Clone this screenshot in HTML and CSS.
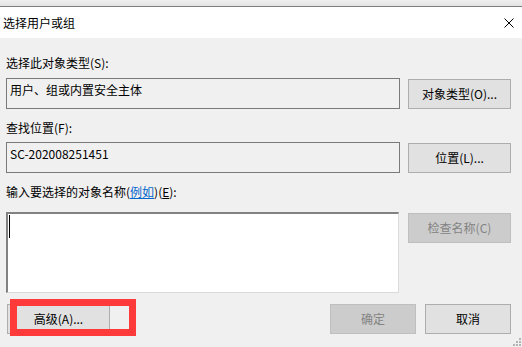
FILE: index.html
```html
<!DOCTYPE html>
<html lang="zh-CN">
<head>
  <meta charset="UTF-8" />
  <title>选择用户或组</title>
  <link rel="stylesheet" href="styles.css">
</head>
<body>

  <div class="dialog">
    <div class="topedge"></div>

    <div class="titlebar">
      <span class="title">选择用户或组</span>
      <svg class="close" width="10" height="10" viewBox="0 0 10 10">
        <path d="M0.5 0.5 L9.5 9.5 M9.5 0.5 L0.5 9.5" stroke="#000" stroke-width="1" fill="none" />
      </svg>
    </div>

    <div class="content">
      <div class="label label-first">选择此对象类型(S):</div>
      <div class="row">
        <div class="field">用户、组或内置安全主体</div>
        <button class="btn">对象类型(O)...</button>
      </div>

      <div class="label">查找位置(F):</div>
      <div class="row">
        <div class="field">SC-202008251451</div>
        <button class="btn">位置(L)...</button>
      </div>

      <div class="label label-names">输入要选择的对象名称(<a class="link" href="#">例如</a>)(<u>E</u>):</div>
      <div class="row">
        <div class="textbox"><span class="caret"></span></div>
        <button class="btn" disabled>检查名称(C)</button>
      </div>

      <div class="bottom">
        <div class="advanced">
          <button class="btn btn-wide">高级(A)...</button>
          <div class="mark"></div>
        </div>
        <div class="actions">
          <button class="btn btn-small" disabled>确定</button>
          <button class="btn btn-small">取消</button>
        </div>
      </div>
    </div>

    <svg class="grip" width="8" height="8" viewBox="0 0 8 8">
      <rect x="6" y="0" width="2" height="2" fill="#b4b4b4" />
      <rect x="3" y="3" width="2" height="2" fill="#b4b4b4" />
      <rect x="6" y="3" width="2" height="2" fill="#b4b4b4" />
      <rect x="0" y="6" width="2" height="2" fill="#b4b4b4" />
      <rect x="3" y="6" width="2" height="2" fill="#b4b4b4" />
      <rect x="6" y="6" width="2" height="2" fill="#b4b4b4" />
    </svg>
  </div>

</body>
</html>
```

FILE: styles.css
```css
html, body {
  margin: 0;
  padding: 0;
}
body {
  font-family: "Noto Sans CJK SC", "Noto Sans", sans-serif;
  font-size: 12px;
  line-height: 16px;
  color: #000;
  background: #f0f0f0;
}
.dialog {
  position: relative;
  width: 522px;
  height: 347px;
  overflow: hidden;
  background: #f0f0f0;
}
.topedge {
  height: 6px;
  background: linear-gradient(#efefef, #e4e4e4);
  border-bottom: 1px solid #7e7e7e;
}
.titlebar {
  height: 31px;
  background: #fff;
  display: flex;
  align-items: center;
  justify-content: space-between;
  padding: 0 8px 0 3px;
}
.close {
  display: block;
}
.content {
  padding: 17px 11px 0 6px;
}
.label {
  margin-bottom: 6px;
}
.label-first {
  margin-bottom: 7px;
}
.label-names {
  margin-bottom: 12px;
}
.link {
  color: #0066cc;
  text-decoration: underline;
}
.row {
  display: flex;
  justify-content: space-between;
  align-items: flex-start;
  margin-bottom: 11px;
}
.field {
  box-sizing: border-box;
  width: 394px;
  height: 31px;
  border: 1px solid #7a7a7a;
  background: #f0f0f0;
  padding: 3px 3px 0;
}
.textbox {
  box-sizing: border-box;
  width: 393px;
  height: 81px;
  background: #fff;
  border-top: 2px solid #828282;
  border-left: 2px solid #828282;
  border-right: 1px solid #dadada;
  border-bottom: 1px solid #dadada;
  padding: 1px 0 0 1px;
}
.caret {
  display: block;
  width: 1px;
  height: 23px;
  background: #000;
}
.btn {
  box-sizing: border-box;
  width: 103px;
  height: 30px;
  margin-top: 1px;
  padding: 0;
  font: inherit;
  color: #000;
  background: #e1e1e1;
  border: 1px solid #adadad;
}
.btn:disabled {
  color: #838383;
  background: #cccccc;
  border-color: #bfbfbf;
}
.bottom {
  display: flex;
  justify-content: space-between;
  margin-top: 2px;
}
.bottom .btn {
  margin-top: 0;
}
.advanced {
  position: relative;
  padding-left: 1px;
}
.mark {
  position: absolute;
  left: 4px;
  top: -5px;
  width: 126px;
  height: 37px;
  box-sizing: border-box;
  border: 7px solid #ff3a3a;
}
.actions {
  display: flex;
  gap: 9px;
}
.btn-small {
  width: 86px;
}
.grip {
  position: absolute;
  right: 1px;
  bottom: 1px;
}
```
